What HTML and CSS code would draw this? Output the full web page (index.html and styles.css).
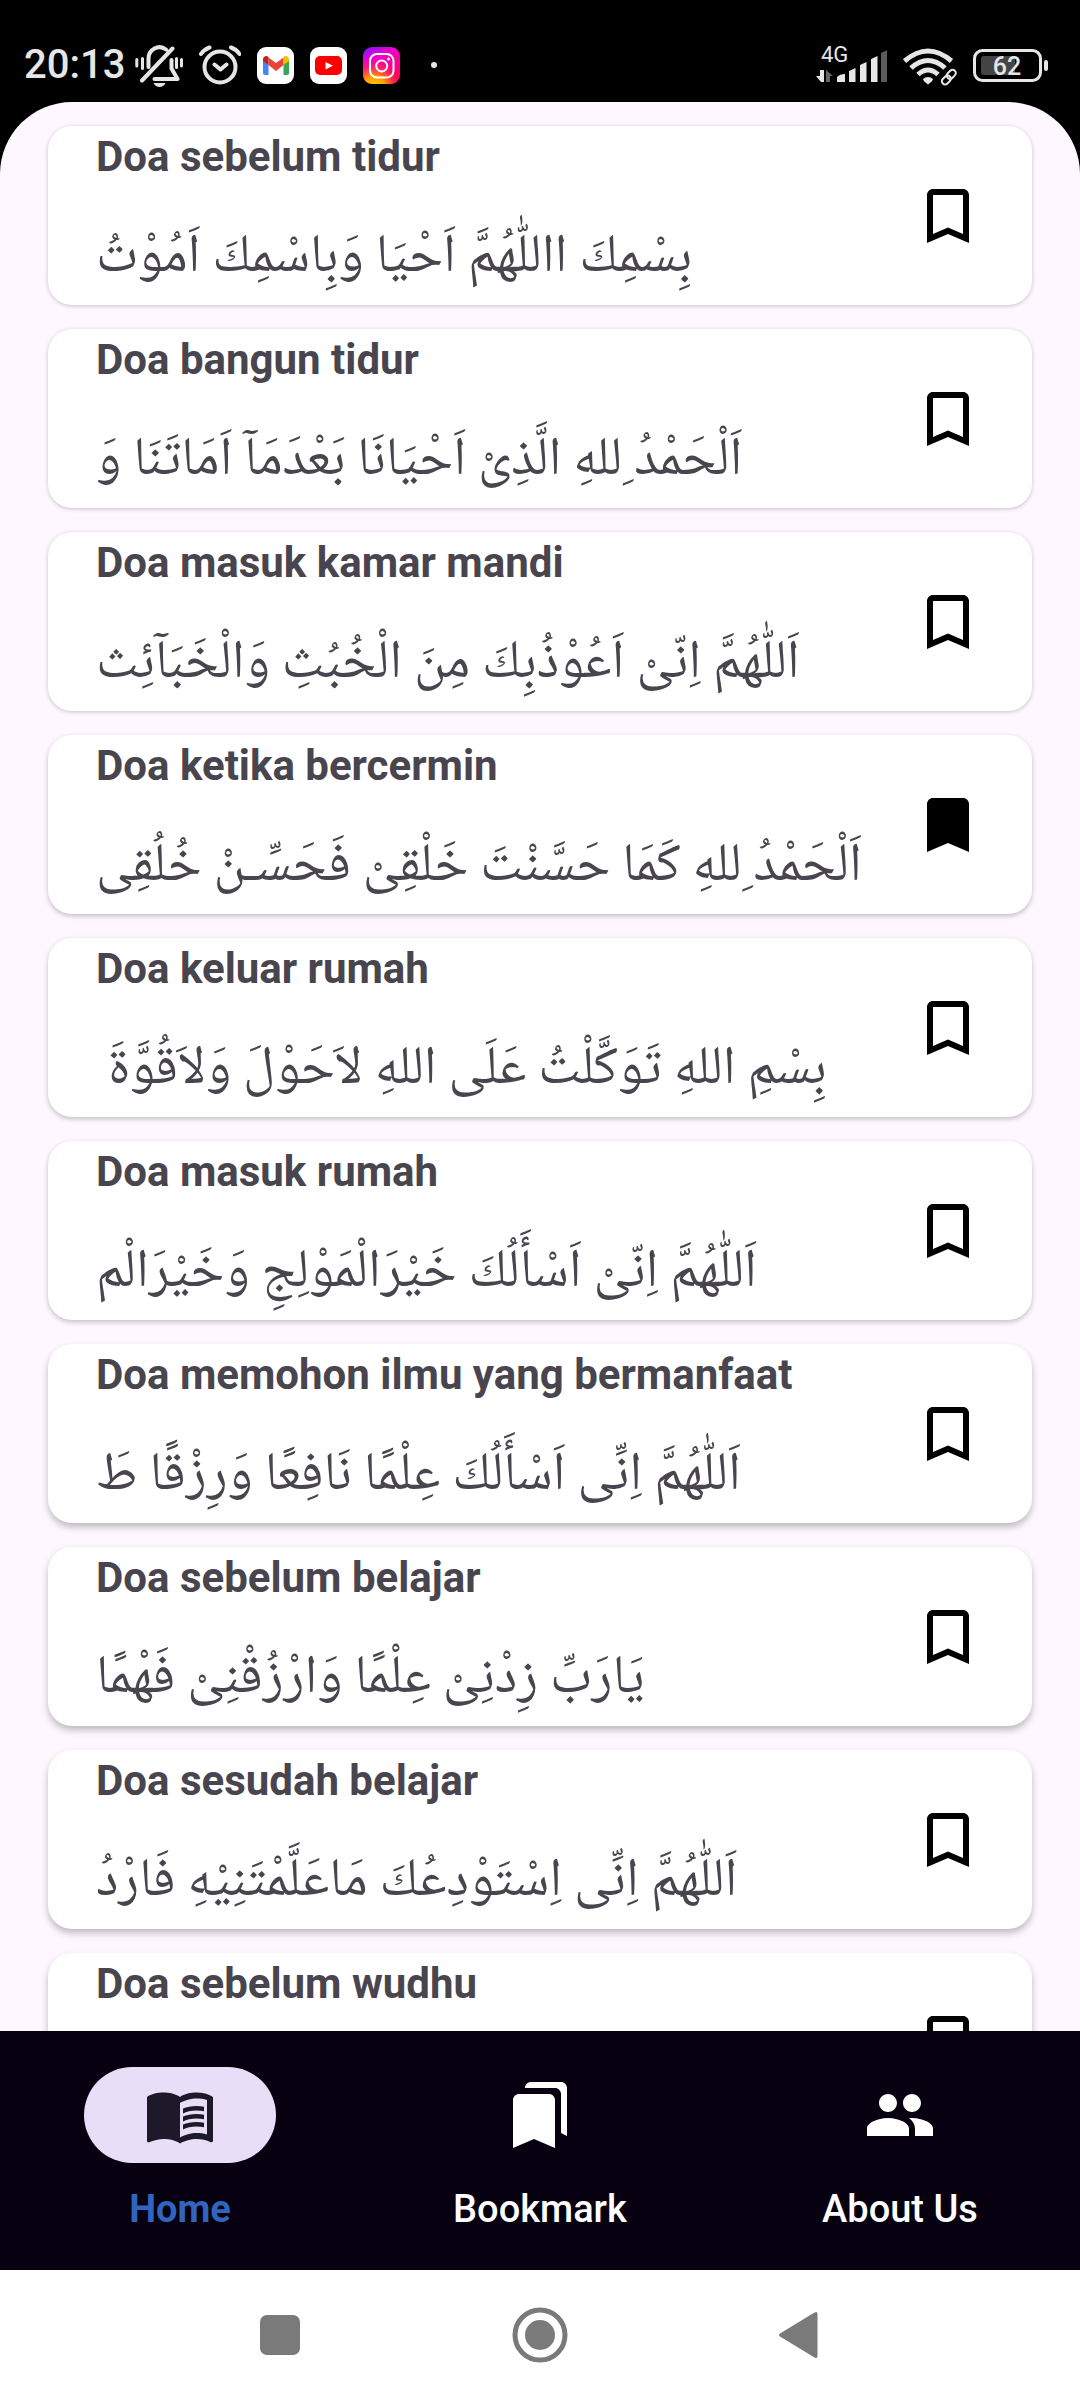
FILE: index.html
```html
<!DOCTYPE html>
<html lang="id">
<head>
<meta charset="utf-8">
<meta name="viewport" content="width=device-width, initial-scale=1">
<title>Doa Harian</title>
<link rel="stylesheet" href="styles.css">
</head>
<body>
<svg class="defs" aria-hidden="true">
  <symbol id="bookmark" viewBox="0 0 24 24"><path d="M17 3H7c-1.1 0-2 .9-2 2v16l7-3 7 3V5c0-1.1-.9-2-2-2zm0 15l-5-2.180-5 2.180V5h10v13z"/></symbol>
  <symbol id="bookmark-filled" viewBox="0 0 24 24"><path d="M17 3H7c-1.100 0-2 .9-2 2v16l7-3 7 3V5c0-1.100-.9-2-2-2z"/></symbol>
</svg>

<header class="status">
  <div class="status-left">
    <span class="clock">20:13</span>
    <svg class="status-icon" width="48" height="44" viewBox="135 42 48 44" fill="none" stroke="#e6e6e6" stroke-width="4" stroke-linecap="round" stroke-linejoin="round">
      <path d="M148.500 66V58a11 11.500 0 0 1 17.500-9.500M171.500 59v8.500l6 10.500h-23M142 79.500L172.500 47.500"/>
      <path stroke-width="3" d="M136.800 58.500v6.500M142.500 57.500v10M176.500 57.500v9M181.500 58.500v6.500"/>
      <path fill="#e6e6e6" stroke="none" d="M153.500 82h12q-2 4-6 4t-6-4z"/>
    </svg>
    <svg class="status-icon" width="42" height="44" viewBox="199 42 42 44" fill="none" stroke="#e6e6e6" stroke-width="4" stroke-linecap="round" stroke-linejoin="round">
      <circle cx="220" cy="66" r="15.500"/>
      <path d="M214.500 63.500l6 5 6-5M201 53q3-4.500 8.500-6.500M239.500 53q-3-4.500-8.500-6.500"/>
    </svg>
    <svg class="status-icon" width="37" height="37" viewBox="0 0 37 37">
      <rect width="37" height="37" rx="9" fill="#fff"/>
      <path fill="#4285f4" d="M6 13l5.500 4v11H8a2 2 0 0 1-2-2z"/>
      <path fill="#34a853" d="M32 13l-5.500 4v11H30a2 2 0 0 0 2-2z"/>
      <path fill="#ea4335" d="M11.500 10.500L19 16l7.500-5.500v7.500L19 24l-7.500-6z"/>
      <path fill="#c5221f" d="M6 12a3.300 3.300 0 0 1 5.500-2V18L6 14z"/>
      <path fill="#fbbc04" d="M32 12a3.300 3.300 0 0 0-5.500-2V18l5.500-4z"/>
    </svg>
    <svg class="status-icon" width="37" height="37" viewBox="0 0 37 37">
      <rect width="37" height="37" rx="9" fill="#fff"/>
      <rect x="5" y="9" width="27" height="19" rx="5" fill="#f00"/>
      <path fill="#fff" d="M15.500 15v7.500l7.500-3.700z"/>
    </svg>
    <svg class="status-icon" width="37" height="37" viewBox="0 0 37 37">
      <defs>
        <linearGradient id="ig-base" x1="0" y1="0" x2="0.500" y2="1"><stop offset="0" stop-color="#6a1cff"/><stop offset=".35" stop-color="#f000d0"/><stop offset="1" stop-color="#ff0060"/></linearGradient>
        <radialGradient id="ig-glow" cx=".3" cy="1.100" r=".8"><stop offset="0" stop-color="#ffd600"/><stop offset=".4" stop-color="#ff9a00"/><stop offset="1" stop-color="#ff0060" stop-opacity="0"/></radialGradient>
      </defs>
      <rect width="37" height="37" rx="9" fill="url(#ig-base)"/>
      <rect width="37" height="37" rx="9" fill="url(#ig-glow)"/>
      <g fill="none" stroke="#fff" stroke-width="2"><rect x="7" y="7" width="23.500" height="23.500" rx="7"/><circle cx="18.700" cy="19" r="5.500"/></g>
      <circle cx="25.500" cy="12" r="1.500" fill="#fff"/>
    </svg>
    <svg class="status-icon" width="37" height="37" viewBox="0 0 37 37"><circle cx="18" cy="18" r="3" fill="#e6e6e6"/></svg>
  </div>
  <div class="status-right">
    <svg class="status-icon" width="71" height="44" viewBox="816 42 71 44" fill="#e6e6e6">
      <text class="network" x="821" y="61">4G</text>
      <path d="M824 69v12h-3l-5-6h4v-6z"/>
      <path fill="#666" d="M826 81V69l7 6h-3v6z"/>
      <path d="M837 81v-5q3-3 8-3v8zM849 81V70l6.500-3V81zM860 81V64l6.500-3V81zM871 81V58l6.500-3V81z"/>
      <path fill="#5c5c5c" d="M881 81V52l6.500-3V81z"/>
    </svg>
    <svg class="status-icon" width="54" height="44" viewBox="903 42 54 44" fill="none" stroke="#e6e6e6" stroke-width="5">
      <path d="M904.500 60q23.500-20 47 0M911 67q17-15 34 0M918 73.500q10-9 20 0"/>
      <path fill="#e6e6e6" stroke="none" d="M923 78q5-4 10 0q0 2-5 5.500q-5-3.500-5-5.500z"/>
      <g transform="rotate(-45 949 76)" stroke-width="2"><rect x="940" y="73" width="10" height="6.500" rx="3.200"/><rect x="947.500" y="72.500" width="10" height="6.500" rx="3.200"/></g>
    </svg>
    <svg class="status-icon" width="75" height="44" viewBox="973 42 75 44">
      <rect x="974.500" y="49.500" width="66" height="30" rx="8" fill="none" stroke="#e6e6e6" stroke-width="3"/>
      <rect x="981" y="55" width="34" height="19" rx="3" fill="#444"/>
      <rect x="1044" y="59" width="4" height="11" rx="2" fill="#e6e6e6"/>
      <text class="charge" x="1007" y="74" text-anchor="middle">62</text>
    </svg>
  </div>
</header>

<main class="screen">
  <ul class="list">
    <li class="card">
      <div class="card-text"><h2 class="card-title">Doa sebelum tidur</h2><p class="card-arabic" lang="ar" dir="rtl">بِسْمِكَ االلّٰهُمَّ اَحْيَا وَبِاسْمِكَ اَمُوْتُ</p></div>
      <button class="mark" type="button" aria-label="Simpan Doa sebelum tidur"><svg class="mark-icon"><use href="#bookmark"/></svg></button>
    </li>
    <li class="card">
      <div class="card-text"><h2 class="card-title">Doa bangun tidur</h2><p class="card-arabic" lang="ar" dir="rtl">اَلْحَمْدُ ِللهِ الَّذِىْ اَحْيَانَا بَعْدَمَآ اَمَاتَنَا وَ</p></div>
      <button class="mark" type="button" aria-label="Simpan Doa bangun tidur"><svg class="mark-icon"><use href="#bookmark"/></svg></button>
    </li>
    <li class="card">
      <div class="card-text"><h2 class="card-title">Doa masuk kamar mandi</h2><p class="card-arabic" lang="ar" dir="rtl">اَللّٰهُمَّ اِنّىْ اَعُوْذُبِكَ مِنَ الْخُبُثِ وَالْخَبَآئِث</p></div>
      <button class="mark" type="button" aria-label="Simpan Doa masuk kamar mandi"><svg class="mark-icon"><use href="#bookmark"/></svg></button>
    </li>
    <li class="card">
      <div class="card-text"><h2 class="card-title">Doa ketika bercermin</h2><p class="card-arabic" lang="ar" dir="rtl">اَلْحَمْدُ ِللهِ كَمَا حَسَّنْتَ خَلْقِىْ فَحَسِّـنْ خُلُقِى</p></div>
      <button class="mark" type="button" aria-pressed="true" aria-label="Simpan Doa ketika bercermin"><svg class="mark-icon"><use href="#bookmark-filled"/></svg></button>
    </li>
    <li class="card">
      <div class="card-text"><h2 class="card-title">Doa keluar rumah</h2><p class="card-arabic" lang="ar" dir="rtl">بِسْمِ اللهِ تَوَكَّلْتُ عَلَى اللهِ لاَحَوْلَ وَلاَقُوَّةَ&nbsp;</p></div>
      <button class="mark" type="button" aria-label="Simpan Doa keluar rumah"><svg class="mark-icon"><use href="#bookmark"/></svg></button>
    </li>
    <li class="card">
      <div class="card-text"><h2 class="card-title">Doa masuk rumah</h2><p class="card-arabic" lang="ar" dir="rtl">اَللّٰهُمَّ اِنّىْ اَسْأَلُكَ خَيْرَالْمَوْلِجِ وَخَيْرَالْم</p></div>
      <button class="mark" type="button" aria-label="Simpan Doa masuk rumah"><svg class="mark-icon"><use href="#bookmark"/></svg></button>
    </li>
    <li class="card">
      <div class="card-text"><h2 class="card-title">Doa memohon ilmu yang bermanfaat</h2><p class="card-arabic" lang="ar" dir="rtl">اَللّٰهُمَّ اِنِّى اَسْأَلُكَ عِلْمًا نَافِعًا وَرِزْقًا طَ</p></div>
      <button class="mark" type="button" aria-label="Simpan Doa memohon ilmu yang bermanfaat"><svg class="mark-icon"><use href="#bookmark"/></svg></button>
    </li>
    <li class="card">
      <div class="card-text"><h2 class="card-title">Doa sebelum belajar</h2><p class="card-arabic" lang="ar" dir="rtl">يَارَبِّ زِدْنِىْ عِلْمًا وَارْزُقْنِىْ فَهْمًا</p></div>
      <button class="mark" type="button" aria-label="Simpan Doa sebelum belajar"><svg class="mark-icon"><use href="#bookmark"/></svg></button>
    </li>
    <li class="card">
      <div class="card-text"><h2 class="card-title">Doa sesudah belajar</h2><p class="card-arabic" lang="ar" dir="rtl">اَللّٰهُمَّ اِنِّى اِسْتَوْدِعُكَ مَاعَلَّمْتَنِيْهِ فَارْدُ</p></div>
      <button class="mark" type="button" aria-label="Simpan Doa sesudah belajar"><svg class="mark-icon"><use href="#bookmark"/></svg></button>
    </li>
    <li class="card">
      <div class="card-text"><h2 class="card-title">Doa sebelum wudhu</h2></div>
      <button class="mark" type="button" aria-label="Simpan Doa sebelum wudhu"><svg class="mark-icon"><use href="#bookmark"/></svg></button>
    </li>
  </ul>
</main>

<nav class="tabs">
  <a class="tab tab-active" href="#home" aria-current="page">
    <span class="tab-pill"><svg class="tab-icon" viewBox="0 0 24 24"><path d="M17.500 4.500c-1.950 0-4.050.4-5.500 1.500-1.450-1.100-3.550-1.500-5.500-1.500S2.450 4.900 1 6v14.650c0 .25.25.5.5.5.1 0 .15-.05.25-.05C3.100 20.450 5.050 20 6.500 20c1.950 0 4.050.4 5.500 1.500 1.350-.85 3.800-1.500 5.500-1.500 1.650 0 3.350.3 4.750 1.050.1.05.15.05.25.05.25 0 .5-.25.5-.5V6c-1.500-1.100-3.550-1.500-5.500-1.500zM21 18.500c-1.100-.35-2.300-.5-3.500-.5-1.700 0-4.150.65-5.500 1.500V8c1.350-.85 3.800-1.500 5.500-1.500 1.200 0 2.400.15 3.500.5v11.500z"/><path d="M17.500 10.500c.88 0 1.730.09 2.500.26V9.240c-.79-.15-1.640-.24-2.500-.24-1.700 0-3.240.29-4.500.83v1.660c1.130-.64 2.700-.99 4.500-.99zM13 12.490v1.660c1.130-.64 2.700-.99 4.500-.99.88 0 1.730.09 2.500.26V11.900c-.79-.15-1.640-.24-2.500-.24-1.700 0-3.240.3-4.500.83zM17.500 14.330c-1.700 0-3.240.29-4.500.83v1.660c1.130-.64 2.700-.99 4.500-.99.88 0 1.730.09 2.500.26v-1.520c-.79-.16-1.640-.24-2.500-.24z"/></svg></span>
    <span class="tab-label">Home</span>
  </a>
  <a class="tab" href="#bookmark-list">
    <span class="tab-pill"><svg class="tab-icon" viewBox="0 0 24 24"><path d="M19 18l2 1V3c0-1.100-.9-2-2-2H8.990C7.890 1 7 1.900 7 3h10c1.100 0 2 .9 2 2v13zM15 5H5c-1.100 0-2 .9-2 2v16l7-3 7 3V7c0-1.100-.9-2-2-2z"/></svg></span>
    <span class="tab-label">Bookmark</span>
  </a>
  <a class="tab" href="#about">
    <span class="tab-pill"><svg class="tab-icon" viewBox="0 0 24 24"><path d="M16 11c1.660 0 2.990-1.340 2.990-3S17.660 5 16 5s-3 1.340-3 3 1.340 3 3 3zm-8 0c1.660 0 2.990-1.340 2.990-3S9.660 5 8 5 5 6.340 5 8s1.340 3 3 3zm0 2c-2.330 0-7 1.170-7 3.500V19h14v-2.500c0-2.330-4.670-3.500-7-3.500zm8 0c-.29 0-.62.02-.97.05 1.160.84 1.970 1.970 1.970 3.450V19h6v-2.500c0-2.330-4.670-3.500-7-3.500z"/></svg></span>
    <span class="tab-label">About Us</span>
  </a>
</nav>

<footer class="system">
  <button class="system-key" type="button" aria-label="Aplikasi terbaru"><svg width="56" height="56" viewBox="0 0 56 56"><rect x="8" y="8" width="40" height="40" rx="7"/></svg></button>
  <button class="system-key" type="button" aria-label="Beranda"><svg width="56" height="56" viewBox="0 0 56 56"><circle cx="28" cy="28" r="25" fill="none" stroke="#7a7a7a" stroke-width="5"/><circle cx="28" cy="28" r="15"/></svg></button>
  <button class="system-key" type="button" aria-label="Kembali"><svg width="56" height="56" viewBox="0 0 56 56"><path d="M8 26.500L42.500 5.500q3-1.500 3 1.500v42q0 3-3 1.500L8 29.500q-2-1.500 0-3z"/></svg></button>
</footer>
</body>
</html>
```
FILE: styles.css
```css
* {
  box-sizing: border-box;
}

body {
  margin: 0;
  height: 100vh;
  display: flex;
  flex-direction: column;
  background: #000;
  font-family: Roboto, "Liberation Sans", sans-serif;
}

h2,
p,
ul {
  margin: 0;
  padding: 0;
}

button {
  border: 0;
  padding: 0;
  background: none;
}

.defs {
  display: none;
}

/* Status bar */
.status {
  display: flex;
  justify-content: space-between;
  align-items: center;
  height: 102px;
  padding: 28px 32px 0 24px;
  color: #e6e6e6;
}

.status-left,
.status-right {
  display: flex;
  align-items: center;
  gap: 16px;
}

.clock {
  margin-right: -6px;
  font-size: 40px;
  font-weight: 500;
  line-height: 48px;
}

.status-icon {
  flex: none;
}

.network {
  font-size: 22px;
}

.charge {
  font-size: 25px;
  font-weight: 500;
  fill: #e6e6e6;
}

/* Prayer list */
.screen {
  flex: 1;
  min-height: 0;
  overflow: hidden;
  border-radius: 72px 72px 0 0;
  background: #fef7ff;
}

.list {
  display: flex;
  flex-direction: column;
  gap: 24px;
  padding: 24px 48px;
  list-style: none;
}

.card {
  display: flex;
  align-items: center;
  justify-content: space-between;
  height: 179px;
  padding: 0 48px;
  border-radius: 24px;
  background: #fff;
  color: #49454f;
  box-shadow: 0 1px 4px rgba(0, 0, 0, 0.22);
}

.card:nth-child(n + 4) {
  box-shadow: 0 2px 5px rgba(0, 0, 0, 0.24);
}

.card:nth-child(n + 7) {
  box-shadow: 0 4px 7px rgba(0, 0, 0, 0.26);
}

.card-text {
  align-self: flex-start;
  padding-top: 6px;
}

.card-title {
  font-size: 42px;
  font-weight: 700;
  line-height: 50px;
}

.card-arabic {
  margin-top: 17px;
  font-family: "Noto Naskh Arabic", "DejaVu Sans", sans-serif;
  font-size: 54px;
  line-height: 120px;
  text-align: left;
  white-space: nowrap;
}

.mark {
  flex: none;
  width: 72px;
  height: 72px;
}

.mark-icon {
  display: block;
  width: 72px;
  height: 72px;
}

/* Bottom tabs */
.tabs {
  display: flex;
  padding: 36px 0 39px;
  background: #060010;
}

.tab {
  flex: 1;
  display: flex;
  flex-direction: column;
  align-items: center;
  gap: 24px;
  color: #fff;
  text-decoration: none;
}

.tab-pill {
  display: flex;
  align-items: center;
  justify-content: center;
  width: 192px;
  height: 96px;
  border-radius: 48px;
}

.tab-icon {
  width: 72px;
  height: 72px;
  fill: currentColor;
}

.tab-label {
  font-size: 38px;
  font-weight: 500;
  line-height: 44px;
}

.tab-active .tab-pill {
  background: #e8def8;
  color: #1d192b;
}

.tab-active .tab-label {
  color: #3064be;
  font-weight: 700;
}

/* System navigation keys */
.system {
  display: flex;
  justify-content: center;
  gap: 204px;
  padding: 37px 0;
  background: #fff;
}

.system-key {
  width: 56px;
  height: 56px;
  fill: #7a7a7a;
}
```
